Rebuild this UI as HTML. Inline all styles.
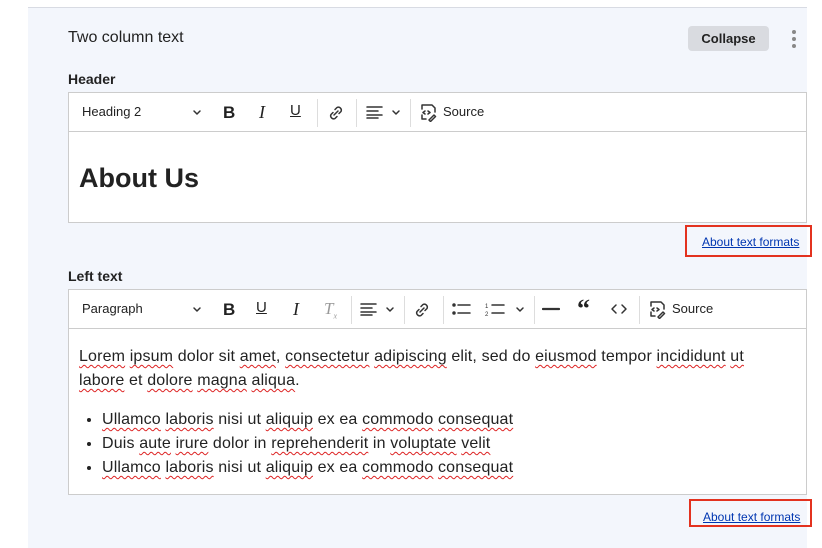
<!DOCTYPE html>
<html><head><style>
body{margin:0;width:822px;height:537px;background:#fff;font-family:"Liberation Sans",Arial,sans-serif;color:#222;position:relative;overflow:hidden}
.panel{position:absolute;left:28px;top:7px;width:779px;height:540px;background:#f3f6fc;border-top:1px solid #d8dbe3}
.a{position:absolute}
.ed{position:absolute;left:68px;width:737px;background:#fff;border:1px solid #ccc}
.tb{height:38px;border-bottom:1px solid #ccc;position:relative;font-size:13px}
.tb span{position:absolute;top:11px}
.sep{position:absolute;top:6px;width:1px;height:28px;background:#ddd}
.lnk{position:absolute;border:2px solid #e3321f;font-size:12px;color:#0036b1;text-decoration:underline;box-sizing:border-box;padding:8px 0 0 15px}
.sq{text-decoration:underline wavy #d22;text-decoration-skip-ink:none;text-underline-offset:3px;text-decoration-thickness:1px}
svg{position:absolute;fill:none;stroke:#333;stroke-width:1.5;stroke-linecap:round;stroke-linejoin:round}
.txt{letter-spacing:0.15px}
</style></head><body>
<div class="panel"></div>
<div class="a" style="left:68px;top:29px;font-size:16px">Two column text</div>
<div class="a" style="left:688px;top:26px;width:81px;height:25px;background:#d9dbe0;border-radius:4px;font-size:13px;font-weight:bold;text-align:center;line-height:25px">Collapse</div>
<div class="a" style="left:792px;top:30px;width:4px">
<div style="width:4px;height:4px;border-radius:2px;background:#888;margin-bottom:3px"></div><div style="width:4px;height:4px;border-radius:2px;background:#888;margin-bottom:3px"></div><div style="width:4px;height:4px;border-radius:2px;background:#888"></div></div>
<div class="a" style="left:68px;top:71px;font-size:14px;font-weight:bold">Header</div>
<div class="ed" style="top:92px;height:129px">
<div class="tb">
<span style="left:13px">Heading 2</span>
<svg style="left:123px;top:16px" width="10" height="8"><path d="M2 2l3 3 3-3"/></svg>
<span style="left:154px;font-weight:bold;font-size:17px;top:10px">B</span>
<span style="left:190px;font-style:italic;font-family:'Liberation Serif';font-size:18px;top:9px">I</span>
<span style="left:221px;text-decoration:underline;font-size:15px;top:9px">U</span>
<div class="sep" style="left:248px"></div>
<svg style="left:257px;top:10px" width="20" height="20"><path d="M8 12l4-4M7 9.5L5 11.5a3 3 0 004 4L11 13.5M13 10.5l2-2a3 3 0 00-4-4L9 6.5"/></svg>
<div class="sep" style="left:287px"></div>
<svg style="left:297px;top:12px" width="18" height="14"><path d="M1 2h15M1 6h11M1 10h15M1 13h11"/></svg>
<svg style="left:322px;top:16px" width="10" height="8"><path d="M2 2l3 3 3-3"/></svg>
<div class="sep" style="left:341px"></div>
<svg style="left:349px;top:9px" width="20" height="20"><path d="M4 7V3h10l3 3v4M4 13v4h4M7 9l-2 1.5L7 12M10 9l2 1.5L10 12M11 18l5-5 1.5 1.5-5 5z"/></svg>
<span style="left:374px">Source</span>
</div>
<div class="a" style="left:10px;top:70px;font-size:27px;font-weight:bold">About Us</div>
</div>
<div class="lnk" style="left:685px;top:225px;width:127px;height:32px">About text formats</div>
<div class="a" style="left:68px;top:268px;font-size:14px;font-weight:bold">Left text</div>
<div class="ed" style="top:289px;height:204px">
<div class="tb">
<span style="left:13px">Paragraph</span>
<svg style="left:123px;top:16px" width="10" height="8"><path d="M2 2l3 3 3-3"/></svg>
<span style="left:154px;font-weight:bold;font-size:17px;top:10px">B</span>
<span style="left:187px;text-decoration:underline;font-size:15px;top:9px">U</span>
<span style="left:224px;font-style:italic;font-family:'Liberation Serif';font-size:18px;top:9px">I</span>
<span style="left:255px;font-style:italic;font-family:'Liberation Serif';font-size:17px;top:9px;color:#999">T<sub style="font-size:8px">x</sub></span>
<div class="sep" style="left:282px"></div>
<svg style="left:291px;top:12px" width="18" height="14"><path d="M1 2h15M1 6h11M1 10h15M1 13h11"/></svg>
<svg style="left:316px;top:16px" width="10" height="8"><path d="M2 2l3 3 3-3"/></svg>
<div class="sep" style="left:335px"></div>
<svg style="left:343px;top:10px" width="20" height="20"><path d="M8 12l4-4M7 9.5L5 11.5a3 3 0 004 4L11 13.5M13 10.5l2-2a3 3 0 00-4-4L9 6.5"/></svg>
<div class="sep" style="left:374px"></div>
<svg style="left:383px;top:12px" width="20" height="14"><circle cx="2" cy="3" r="1" fill="#333"/><circle cx="2" cy="11" r="1" fill="#333"/><path d="M6 3h12M6 11h12"/></svg>
<svg style="left:416px;top:11px" width="20" height="16"><path d="M7 4h12M7 12h12"/><text x="0" y="7" font-size="6" fill="#333" stroke="none">1</text><text x="0" y="15" font-size="6" fill="#333" stroke="none">2</text></svg>
<svg style="left:446px;top:16px" width="10" height="8"><path d="M2 2l3 3 3-3"/></svg>
<div class="sep" style="left:465px"></div>
<svg style="left:473px;top:12px" width="18" height="14"><path d="M1 7h16" style="stroke-width:2.2"/></svg>
<span style="left:508px;font-size:26px;top:4px;font-weight:bold;font-family:'Liberation Serif'">“</span>
<svg style="left:541px;top:12px" width="18" height="14"><path d="M6 3L2 7l4 4M12 3l4 4-4 4"/></svg>
<div class="sep" style="left:570px"></div>
<svg style="left:578px;top:9px" width="20" height="20"><path d="M4 7V3h10l3 3v4M4 13v4h4M7 9l-2 1.5L7 12M10 9l2 1.5L10 12M11 18l5-5 1.5 1.5-5 5z"/></svg>
<span style="left:603px">Source</span>
</div>
<div class="a txt" style="left:10px;top:55px;width:690px;font-size:16px;line-height:24px"><span class="sq">Lorem</span> <span class="sq">ipsum</span> dolor sit <span class="sq">amet</span>, <span class="sq">consectetur</span> <span class="sq">adipiscing</span> elit, sed do <span class="sq">eiusmod</span> tempor <span class="sq">incididunt</span> <span class="sq">ut</span> <span class="sq">labore</span> et <span class="sq">dolore</span> <span class="sq">magna</span> <span class="sq">aliqua</span>.</div>
<ul class="a txt" style="left:0;top:118px;margin:0;padding-left:33px;font-size:16px;line-height:24px">
<li><span class="sq">Ullamco</span> <span class="sq">laboris</span> nisi ut <span class="sq">aliquip</span> ex ea <span class="sq">commodo</span> <span class="sq">consequat</span></li>
<li>Duis <span class="sq">aute</span> <span class="sq">irure</span> dolor in <span class="sq">reprehenderit</span> in <span class="sq">voluptate</span> <span class="sq">velit</span></li>
<li><span class="sq">Ullamco</span> <span class="sq">laboris</span> nisi ut <span class="sq">aliquip</span> ex ea <span class="sq">commodo</span> <span class="sq">consequat</span></li>
</ul>
</div>
<div class="lnk" style="left:689px;top:499px;width:123px;height:28px;padding-top:9px;padding-left:12px">About text formats</div>
</body></html>
